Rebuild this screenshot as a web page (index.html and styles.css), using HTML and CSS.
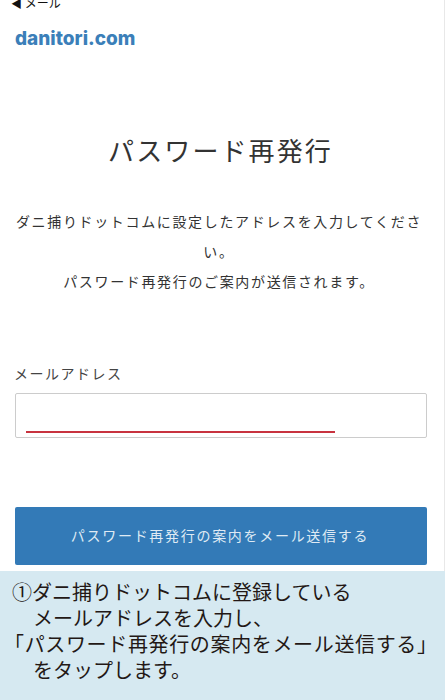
FILE: index.html
```html
<!DOCTYPE html>
<html lang="ja">
<head>
  <meta charset="UTF-8">
  <title>パスワード再発行</title>
  <link rel="stylesheet" href="styles.css">
</head>
<body>
  <div class="page">
    <div class="statusbar"><span class="back">◀</span> メール</div>
    <div class="logo">danitori.com</div>
    <h1>パスワード再発行</h1>
    <div class="lead">
      <p>ダニ捕りドットコムに設定したアドレスを入力してください。</p>
      <p>パスワード再発行のご案内が送信されます。</p>
    </div>
    <label class="field-label">メールアドレス</label>
    <div class="field"><div class="redline"></div></div>
    <button class="submit">パスワード再発行の案内をメール送信する</button>
  </div>
  <div class="note">
    <div class="note-line">①ダニ捕りドットコムに登録している</div>
    <div class="note-line indent">メールアドレスを入力し、</div>
    <div class="note-line bracket">「パスワード再発行の案内をメール送信する」</div>
    <div class="note-line indent">をタップします。</div>
  </div>
</body>
</html>
```

FILE: styles.css
```css
* {
  box-sizing: border-box;
}

html, body {
  margin: 0;
  padding: 0;
}

body {
  width: 445px;
  height: 700px;
  overflow: hidden;
  background: #fff;
  color: #333;
  font-family: "Noto Sans CJK JP", "Noto Sans", sans-serif;
}

.page {
  height: 571px;
  padding: 0 17px 0 15px;
  border-right: 1px solid #e8e8e8;
}

.statusbar {
  height: 11px;
  margin-left: -4px;
  font-size: 12px;
  line-height: 6px;
  color: #111;
}

.back {
  font-size: 11px;
}

.logo {
  margin-top: 16px;
  height: 24px;
  font-family: Inter, sans-serif;
  font-weight: 800;
  font-size: 19px;
  line-height: 24px;
  color: #3b7fb9;
}

h1 {
  margin: 77px 0 0 -1px;
  font-size: 26px;
  font-weight: 400;
  line-height: 44px;
  text-align: center;
  letter-spacing: 2.1px;
}

.lead {
  margin: 34px 0 0 -4px;
  font-size: 14px;
  line-height: 30px;
  letter-spacing: 1.65px;
  text-align: center;
}

.lead p {
  margin: 0;
}

.field-label {
  display: block;
  margin: 66px 0 0 -1px;
  font-size: 14px;
  line-height: 22px;
  letter-spacing: 1.5px;
  color: #444;
}

.field {
  width: 412px;
  height: 45px;
  margin-top: 9px;
  padding: 37px 0 0 10px;
  background: #fff;
  border: 1px solid #ccc;
  border-radius: 2px;
}

.redline {
  width: 309px;
  height: 2px;
  background: #c8333f;
}

.submit {
  display: block;
  width: 412px;
  height: 58px;
  margin-top: 69px;
  padding: 0 2px 2px 0;
  border: none;
  border-radius: 2px;
  background: #337ab7;
  color: #dfeaf4;
  font-family: inherit;
  font-size: 14px;
  letter-spacing: 1.7px;
}

.note {
  height: 129px;
  padding-top: 8px;
  background: #d6e9f1;
  color: #231815;
  font-size: 20px;
  line-height: 26px;
}

.note-line {
  white-space: nowrap;
  padding-left: 12px;
}

.note-line.indent {
  padding-left: 33px;
}

.note-line.bracket {
  padding-left: 4px;
  letter-spacing: 0.65px;
}
```
